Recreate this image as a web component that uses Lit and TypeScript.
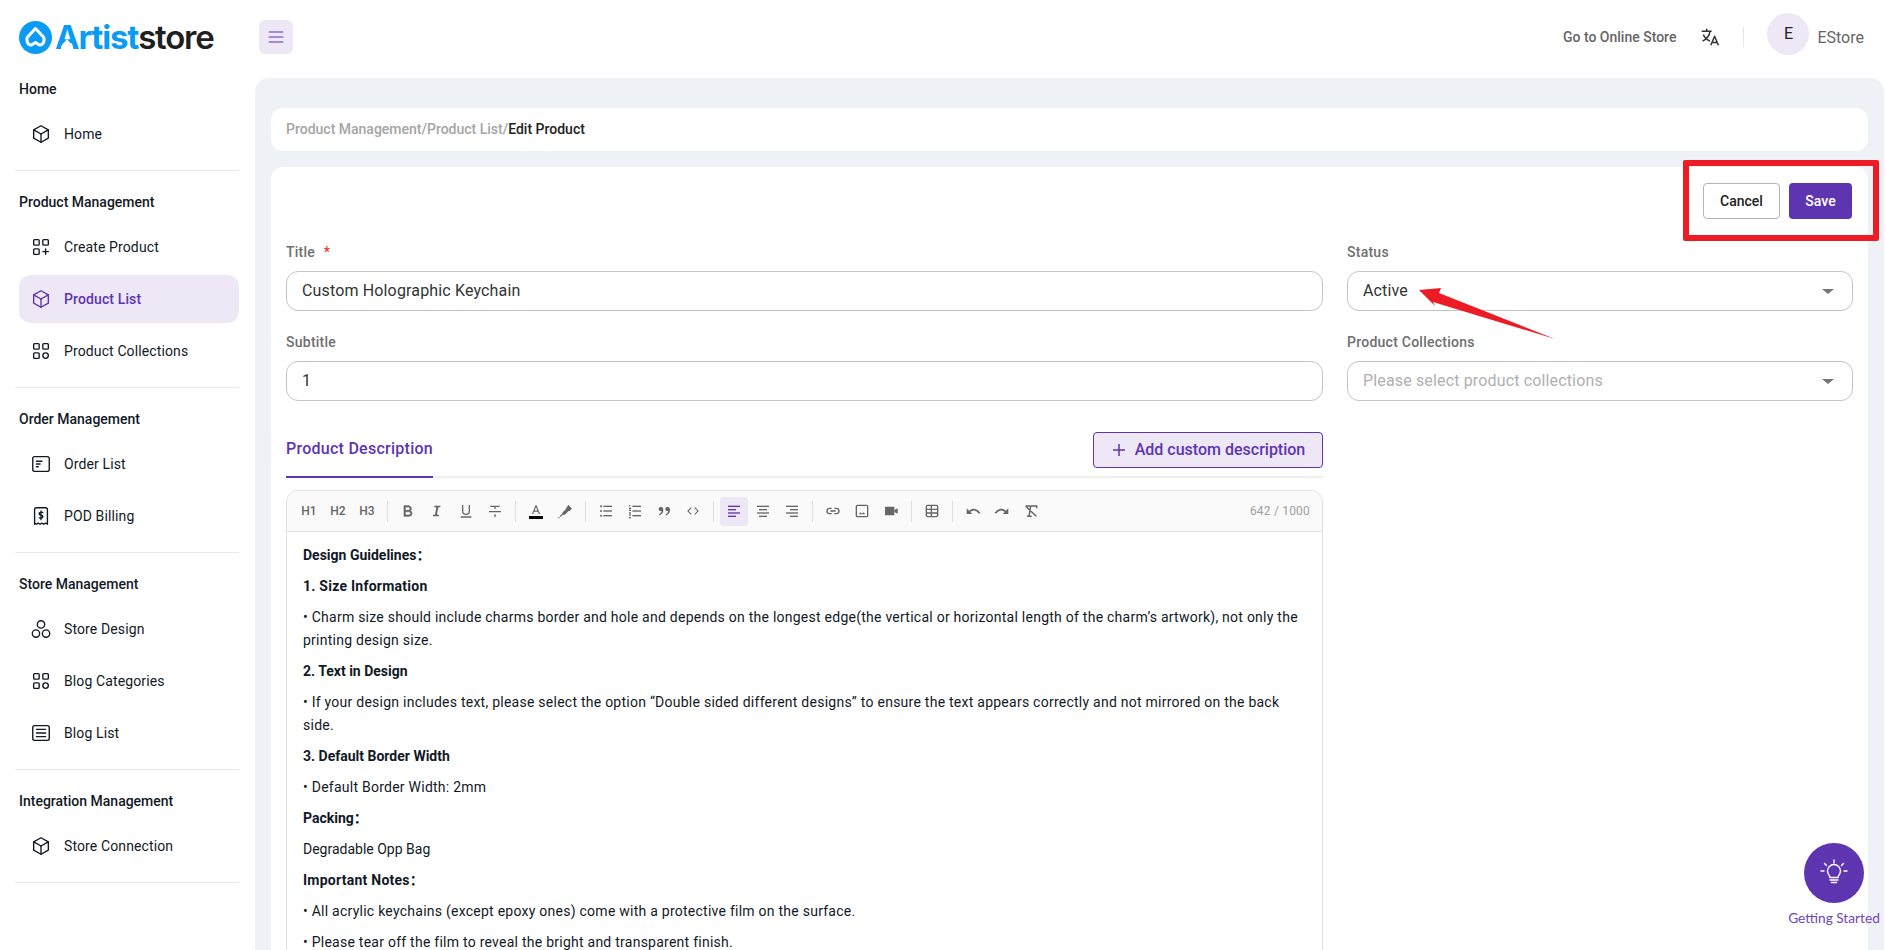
import { LitElement, html, css, svg } from "lit";
import { customElement } from "lit/decorators.js";

// tabler style nav icons, all on a 24 box
const navIcons: Record<string, unknown> = {
  box: svg`<path d="M12 3l8 4.5v9l-8 4.5l-8-4.5v-9z"/><path d="M12 12l8-4.5"/><path d="M12 12v9"/><path d="M12 12l-8-4.5"/>`,
  plus: svg`<rect x="4" y="4" width="6" height="6" rx="1"/><rect x="14" y="4" width="6" height="6" rx="1"/><rect x="4" y="14" width="6" height="6" rx="1"/><path d="M14 17h6M17 14v6"/>`,
  cat: svg`<rect x="4" y="4" width="6" height="6" rx="1"/><rect x="14" y="4" width="6" height="6" rx="1"/><rect x="4" y="14" width="6" height="6" rx="1"/><circle cx="17" cy="17" r="3"/>`,
  order: svg`<rect x="3" y="4" width="18" height="16" rx="2"/><path d="M7 9h6M7 12h4M7 15h2"/>`,
  bill: svg`<path d="M5 21V5a2 2 0 0 1 2-2h10a2 2 0 0 1 2 2v16l-2-1.2-2 1.2-2-1.2-2 1.2-2-1.2-2 1.2-2-1.2z"/><path d="M14 8h-2.5a1.5 1.5 0 0 0 0 3h1a1.5 1.5 0 0 1 0 3H10M12 6.5V16"/>`,
  circles: svg`<circle cx="12" cy="7" r="4"/><circle cx="6.5" cy="17" r="4"/><circle cx="17.5" cy="17" r="4"/>`,
  list: svg`<rect x="3" y="4" width="18" height="16" rx="2"/><path d="M7 8h10M7 12h10M7 16h10"/>`,
};

const navGroups = [
  { title: "Home", items: [{ label: "Home", icon: "box" }] },
  {
    title: "Product Management",
    items: [
      { label: "Create Product", icon: "plus" },
      { label: "Product List", icon: "box", active: true },
      { label: "Product Collections", icon: "cat" },
    ],
  },
  {
    title: "Order Management",
    items: [
      { label: "Order List", icon: "order" },
      { label: "POD Billing", icon: "bill" },
    ],
  },
  {
    title: "Store Management",
    items: [
      { label: "Store Design", icon: "circles" },
      { label: "Blog Categories", icon: "cat" },
      { label: "Blog List", icon: "list" },
    ],
  },
  { title: "Integration Management", items: [{ label: "Store Connection", icon: "box" }] },
];

const lines = (ys: number[][]) =>
  ys.map(([x, y, w]) => svg`<rect x=${x} y=${y} width=${w} height="2"/>`);

// toolbar, null marks a separator
const tools: (unknown | null)[] = [
  "H1",
  "H2",
  "H3",
  null,
  svg`<path d="M8 11h4.5a2.5 2.5 0 0 0 0-5H8v5zm10 4.5a4.5 4.5 0 0 1-4.5 4.5H6V4h6.5a4.5 4.5 0 0 1 3.26 7.61A4.5 4.5 0 0 1 18 15.5zM8 13v5h5.5a2.5 2.5 0 0 0 0-5H8z" stroke="currentColor" stroke-width="1"/>`,
  svg`<path d="M15 20H6v-2.500h2.900L11 6.500H8V4h9v2.500h-3L11.900 17.500H15V20z"/>`,
  svg`<path d="M8 3v9a4 4 0 0 0 8 0V3h2v9a6 6 0 0 1-12 0V3h2zM4 20h16v2H4v-2z"/>`,
  svg`<path d="M13 9h-2V6H5V4h14v2h-6v3zm0 8v4h-2v-4h2zM3 12h18v2H3v-2z"/>`,
  null,
  "color",
  svg`<path d="M16.500 2.500l5 5a1.500 1.500 0 0 1 0 2l-3 3-.800-.800-6 6-3-.500-.500-3 6-6-.800-.800 3-3a1.500 1.500 0 0 1 .100-1.900zM8.500 15.500l1.200 1.200-4.700 4.300-1.200-1.200 4.700-4.300z"/><circle cx="2.800" cy="22" r="1"/>`,
  null,
  svg`${lines([[8, 4, 13], [8, 11, 13], [8, 18, 13]])}<circle cx="4.500" cy="5" r="1.500"/><circle cx="4.500" cy="12" r="1.500"/><circle cx="4.500" cy="19" r="1.500"/>`,
  svg`${lines([[8, 4, 13], [8, 11, 13], [8, 18, 13]])}${lines([[3, 3, 2], [3, 7, 3], [3, 10, 3], [3, 14, 3], [3, 17, 3], [3, 21, 3]])}`,
  svg`<path d="M9.500 6.500c1 1.100 1.500 2.300 1.500 4.200 0 3.400-2.400 6.400-5.800 7.900l-.9-1.300c3.200-1.700 3.900-4 4-5.500-.3.200-.8.300-1.300.300C5.300 12.100 4 10.700 4 9s1.300-3.100 3-3.100c1 0 1.900.200 2.500.600zM19.500 6.500c1 1.100 1.500 2.300 1.500 4.200 0 3.400-2.400 6.400-5.800 7.900l-.9-1.300c3.200-1.700 3.900-4 4-5.500-.3.200-.8.300-1.300.300-1.700 0-3-1.400-3-3.100s1.300-3.100 3-3.100c1 0 1.900.200 2.500.600z"/>`,
  svg`<path d="M23 12l-7.070 7.070-1.410-1.410L20.170 12l-5.650-5.660 1.410-1.410L23 12zM3.830 12l5.650 5.660-1.410 1.410L1 12l7.070-7.070 1.410 1.410L3.830 12z" transform="translate(12 12) scale(.8) translate(-12 -12)"/>`,
  null,
  "alignLeft",
  svg`${lines([[3, 4, 18], [6, 9, 12], [3, 14, 18], [6, 19, 12]])}`,
  svg`${lines([[3, 4, 18], [9, 9, 12], [3, 14, 18], [9, 19, 12]])}`,
  null,
  svg`<path d="M10 8H7a4 4 0 0 0 0 8h3M14 8h3a4 4 0 0 1 0 8h-3M8 12h8" fill="none" stroke="currentColor" stroke-width="2"/>`,
  svg`<rect x="3.500" y="3.500" width="17" height="17" rx="1.500" fill="none" stroke="currentColor" stroke-width="2"/><path d="M7 17l3-3 2 2 2-2 3 3z"/>`,
  svg`<rect x="3" y="5.500" width="14" height="13" rx="1"/><path d="M17 10.500l5-2.500v8l-5-2.500z"/>`,
  null,
  svg`<rect x="3.500" y="3.500" width="17" height="17" rx="2" fill="none" stroke="currentColor" stroke-width="2"/><path d="M3.500 9.500h17M3.500 15h17M11 3.500v17" fill="none" stroke="currentColor" stroke-width="2"/>`,
  null,
  svg`<path d="M7 12.500c4-4 10-4 15 3" fill="none" stroke="currentColor" stroke-width="2.600"/><path d="M2.500 8v8.500H11z"/>`,
  svg`<path d="M17 12.500c-4-4-10-4-15 3" fill="none" stroke="currentColor" stroke-width="2.600"/><path d="M21.500 8v8.500H13z"/>`,
  svg`<path d="M4 4.500h16.500v3.500M11.500 4.500L9 20M4 5l16 15M6 20h7" fill="none" stroke="currentColor" stroke-width="2.200"/>`,
];

// paragraphs of the product description; wide ones carry extra tracking in the reference
const description: { text: string; bold?: boolean; wide?: boolean }[] = [
  { text: "Design Guidelines：", bold: true },
  { text: "1. Size Information", bold: true, wide: true },
  {
    text: "• Charm size should include charms border and hole and depends on the longest edge(the vertical or horizontal length of the charm’s artwork), not only the printing design size.",
    wide: true,
  },
  { text: "2. Text in Design", bold: true },
  {
    text: "• If your design includes text, please select the option “Double sided different designs” to ensure the text appears correctly and not mirrored on the back side.",
    wide: true,
  },
  { text: "3. Default Border Width", bold: true },
  { text: "• Default Border Width: 2mm", wide: true },
  { text: "Packing：", bold: true },
  { text: "Degradable Opp Bag" },
  { text: "Important Notes：", bold: true, wide: true },
  { text: "• All acrylic keychains (except epoxy ones) come with a protective film on the surface.", wide: true },
  { text: "• Please tear off the film to reveal the bright and transparent finish.", wide: true },
];

@customElement("app-root")
export class AppRoot extends LitElement {
  static styles = css`
    :host {
      display: block;
      position: relative;
      height: 950px;
      overflow: hidden;
      background: #fff;
      font-family: Roboto, "Noto Sans CJK SC", sans-serif;
      font-size: 14px;
      color: #121926;
    }
    .page {
      display: flex;
      height: 100%;
    }
    .sidebar {
      flex: 0 0 255px;
      box-sizing: border-box;
    }
    .logo {
      display: flex;
      align-items: center;
      height: 79px;
      padding: 0 0 5px 19px;
      box-sizing: border-box;
      gap: 3px;
    }
    .logo svg {
      width: 33px;
      height: 33px;
    }
    .logo-text {
      position: relative;
      font-family: Inter, sans-serif;
      font-weight: 600;
      font-size: 33px;
      letter-spacing: -1.2px;
      line-height: 36px;
      color: #1f1f1f;
    }
    .logo-text b {
      font-weight: 700;
      color: #0a9bf5;
    }
    .logo-text i {
      position: absolute;
      left: 6px;
      bottom: 4px;
      width: 12px;
      height: 12px;
      background: #fff;
      clip-path: polygon(50% 0, 100% 60%, 100% 100%, 50% 62%, 0 100%, 0 60%);
    }
    nav {
      padding: 0 16px 0 15px;
    }
    .group {
      padding: 21px 0 12px 4px;
      border-bottom: 1px solid #e8e8e8;
    }
    .group:first-child {
      padding-top: 0;
    }
    .group-title {
      height: 20px;
      line-height: 20px;
      font-weight: 500;
      margin-bottom: 11px;
    }
    .item {
      display: flex;
      align-items: center;
      gap: 12px;
      height: 48px;
      padding-left: 11px;
      margin-bottom: 4px;
      border-radius: 12px;
      color: #121926;
      letter-spacing: 0.12px;
    }
    .item:last-child {
      margin-bottom: 0;
    }
    .item svg {
      width: 22px;
      height: 22px;
      fill: none;
      stroke: currentColor;
      stroke-width: 1.5;
      stroke-linecap: round;
      stroke-linejoin: round;
    }
    .item.active {
      background: #ede7f6;
      color: #5e35b1;
      font-weight: 500;
    }
    .right {
      flex: 1;
      min-width: 0;
      display: flex;
      flex-direction: column;
    }
    header {
      flex: 0 0 78px;
      display: flex;
      align-items: center;
      padding: 0 22px 4px 4px;
      box-sizing: border-box;
    }
    .burger {
      width: 34px;
      height: 34px;
      border-radius: 6px;
      background: #ede7f6;
      display: flex;
      align-items: center;
      justify-content: center;
      color: #8e6cce;
    }
    .burger svg {
      width: 20px;
      height: 20px;
    }
    .spacer {
      flex: 1;
    }
    .store-link {
      color: #666;
      font-weight: 500;
    }
    .translate {
      width: 20px;
      height: 20px;
      margin-left: 24px;
      color: #333;
    }
    .vline {
      width: 1px;
      height: 20px;
      background: #e6e6e6;
      margin: 0 23px;
    }
    .avatar {
      width: 42px;
      height: 42px;
      box-sizing: border-box;
      padding-bottom: 2px;
      border-radius: 50%;
      background: #ede7f6;
      display: flex;
      align-items: center;
      justify-content: center;
      font-size: 16px;
      color: #222;
      margin: 0 8px 6px 0;
    }
    .user {
      font-size: 16px;
      color: #666;
    }
    .panel {
      flex: 1;
      min-height: 0;
      margin-right: 2px;
      padding: 30px 16px 0;
      background: #eef1f6;
      border-radius: 14px 14px 0 0;
    }
    .crumbs {
      display: flex;
      align-items: center;
      height: 43px;
      box-sizing: border-box;
      padding: 0 0 1px 15px;
      margin-bottom: 16px;
      background: #fff;
      border-radius: 12px;
      font-weight: 500;
      color: #a5a5a5;
    }
    .crumbs span {
      color: #222;
    }
    .card {
      background: #fff;
      border-radius: 12px 12px 0 0;
      padding: 16px 16px 0 15px;
      height: 900px;
    }
    .actions {
      display: flex;
      justify-content: flex-end;
      gap: 9px;
      margin-bottom: 23px;
    }
    .btn {
      height: 36px;
      box-sizing: border-box;
      display: flex;
      align-items: center;
      justify-content: center;
      border-radius: 4px;
      font-weight: 500;
    }
    .btn.cancel {
      width: 77px;
      border: 1px solid #b5b5b5;
      color: #222;
    }
    .btn.save {
      width: 63px;
      background: #5e35b1;
      color: #fff;
    }
    .columns {
      display: grid;
      grid-template-columns: 1037px 506px;
      column-gap: 24px;
    }
    .field {
      margin-bottom: 21px;
    }
    .label {
      height: 20px;
      line-height: 20px;
      margin-bottom: 9px;
      color: #6f6f6f;
      font-weight: 500;
      letter-spacing: 0.25px;
    }
    .label i {
      font-style: normal;
      color: #e53935;
      margin-left: 5px;
    }
    .input {
      display: flex;
      align-items: center;
      justify-content: space-between;
      height: 40px;
      box-sizing: border-box;
      padding: 0 15px 2px;
      border: 1px solid #c4c4c4;
      border-radius: 12px;
      font-size: 16px;
      letter-spacing: 0.15px;
      color: #333;
    }
    .input.ph {
      color: #b0b0b0;
    }
    .caret {
      width: 0;
      height: 0;
      border-left: 6px solid transparent;
      border-right: 6px solid transparent;
      border-top: 5px solid #757575;
      margin: 2px 3px 0 0;
    }
    .tabs {
      display: flex;
      justify-content: space-between;
      align-items: flex-end;
      margin-top: 31px;
      border-bottom: 2px solid #eee;
    }
    .tab {
      font-size: 16px;
      font-weight: 500;
      line-height: 24px;
      letter-spacing: 0.26px;
      padding-bottom: 15px;
      margin-bottom: -2px;
      color: #5e35b1;
      border-bottom: 2px solid #5e35b1;
    }
    .add {
      display: flex;
      align-items: center;
      justify-content: center;
      gap: 8px;
      width: 230px;
      height: 36px;
      box-sizing: border-box;
      padding-bottom: 1px;
      margin-bottom: 8px;
      background: #ede7f6;
      border: 1px solid #5e35b1;
      border-radius: 4px;
      color: #5e35b1;
      font-size: 16px;
      font-weight: 500;
    }
    .add svg {
      width: 16px;
      height: 16px;
    }
    .editor {
      margin-top: 12px;
      border: 1px solid #e0e0e0;
      border-radius: 12px;
      overflow: hidden;
    }
    .toolbar {
      display: flex;
      align-items: center;
      gap: 1px;
      height: 40px;
      padding: 0 12px 0 8px;
      background: #fafafa;
      border-bottom: 1px solid #e0e0e0;
      color: #666;
    }
    .tool {
      flex: 0 0 28px;
      height: 29px;
      display: flex;
      flex-direction: column;
      align-items: center;
      justify-content: center;
      border-radius: 4px;
      font-size: 12px;
      font-weight: 500;
    }
    .tool svg {
      width: 16px;
      height: 16px;
      fill: currentColor;
    }
    .tool.on {
      background: #ede7f6;
      color: #5e35b1;
    }
    .swatch {
      width: 14px;
      height: 3px;
      background: #000;
      margin-top: -1px;
    }
    .tool.color svg {
      width: 14px;
      height: 14px;
    }
    .sep {
      flex: 0 0 1px;
      height: 21px;
      margin: 0 5px;
      background: #e0e0e0;
    }
    .count {
      margin-left: auto;
      font-size: 12px;
      font-weight: 400;
      letter-spacing: 0.2px;
      color: #a0a0a0;
    }
    .body {
      padding: 12px 16px;
      line-height: 23px;
      color: #121926;
    }
    .body p {
      margin: 0 0 8px;
    }
    .body p.bold {
      font-weight: 700;
    }
    .body p.wide {
      letter-spacing: 0.25px;
    }
    .help {
      position: absolute;
      left: 1788px;
      top: 843px;
      width: 92px;
      display: flex;
      flex-direction: column;
      align-items: center;
      gap: 6px;
      font-family: Lato, sans-serif;
      font-size: 13.7px;
      color: #6f45bd;
      white-space: nowrap;
    }
    .help div {
      width: 60px;
      height: 60px;
      border-radius: 50%;
      background: #5e35b1;
      display: flex;
      align-items: center;
      justify-content: center;
    }
    .help svg {
      width: 30px;
      height: 30px;
      fill: none;
      stroke: #fff;
      stroke-width: 1.4;
      stroke-linecap: round;
    }
    .redbox {
      position: absolute;
      left: 1683px;
      top: 160px;
      width: 196px;
      height: 81px;
      box-sizing: border-box;
      border: 6px solid #ed1c24;
      border-radius: 2px;
    }
    .arrow {
      position: absolute;
      left: 1410px;
      top: 280px;
      width: 150px;
      height: 65px;
    }
  `;

  private renderTool(t: unknown) {
    if (t === null) return html`<span class="sep"></span>`;
    if (t === "H1" || t === "H2" || t === "H3") return html`<span class="tool">${t}</span>`;
    if (t === "color") {
      return html`<span class="tool color">
        <svg viewBox="0 0 24 24"><path d="M15.250 15H8.750l-1.600 4H5L11 4h2l6 15h-2.150l-1.600-4zm-.800-2L12 6.900 9.550 13h4.900z"/></svg>
        <span class="swatch"></span>
      </span>`;
    }
    if (t === "alignLeft") {
      return html`<span class="tool on"><svg viewBox="0 0 24 24">${lines([[3, 4, 18], [3, 9, 12], [3, 14, 18], [3, 19, 12]])}</svg></span>`;
    }
    return html`<span class="tool"><svg viewBox="0 0 24 24">${t}</svg></span>`;
  }

  render() {
    return html`
      <div class="page">
        <aside class="sidebar">
          <div class="logo">
            <svg viewBox="0 0 33 33">
              <circle cx="16.500" cy="16.500" r="16.500" fill="#0a9bf5"/>
              <path d="M16.500 7.500L24 15.500C26.500 18.500 24.500 24.500 20.500 24L16.500 21.500L12.500 24C8.500 24.500 6.500 18.500 9 15.500Z" fill="none" stroke="#fff" stroke-width="3" stroke-linejoin="round"/>
            </svg>
            <span class="logo-text"><b>Artist</b>store<i></i></span>
          </div>
          <nav>
            ${navGroups.map(
              (g) => html`
                <div class="group">
                  <div class="group-title">${g.title}</div>
                  ${g.items.map(
                    (it: { label: string; icon: string; active?: boolean }) => html`
                      <div class="item ${it.active ? "active" : ""}">
                        <svg viewBox="0 0 24 24">${navIcons[it.icon]}</svg>
                        <span>${it.label}</span>
                      </div>
                    `
                  )}
                </div>
              `
            )}
          </nav>
        </aside>
        <div class="right">
          <header>
            <div class="burger">
              <svg viewBox="0 0 24 24" fill="none" stroke="currentColor" stroke-width="2" stroke-linecap="round">
                <path d="M4 6h16M4 12h16M4 18h16"/>
              </svg>
            </div>
            <span class="spacer"></span>
            <span class="store-link">Go to Online Store</span>
            <svg class="translate" viewBox="0 0 24 24" fill="none" stroke="currentColor" stroke-width="1.800" stroke-linejoin="round">
              <path d="M2 5h12M8 2v3M4 9c1.500 4 4.500 6.500 8 8M12 5c-.5 5-4 9.500-9 12"/>
              <path d="M13 22l4.500-11 4.500 11M14.500 18.500h6"/>
            </svg>
            <span class="vline"></span>
            <span class="avatar">E</span>
            <span class="user">EStore</span>
          </header>
          <main class="panel">
            <div class="crumbs">Product Management/Product List/<span>Edit Product</span></div>
            <section class="card">
              <div class="actions">
                <div class="btn cancel">Cancel</div>
                <div class="btn save">Save</div>
              </div>
              <div class="columns">
                <div>
                  <div class="field">
                    <div class="label">Title <i>*</i></div>
                    <div class="input">Custom Holographic Keychain</div>
                  </div>
                  <div class="field">
                    <div class="label">Subtitle</div>
                    <div class="input">1</div>
                  </div>
                  <div class="tabs">
                    <div class="tab">Product Description</div>
                    <div class="add">
                      <svg viewBox="0 0 16 16" fill="none" stroke="currentColor" stroke-width="1.500"><path d="M8 2v12M2 8h12"/></svg>
                      Add custom description
                    </div>
                  </div>
                  <div class="editor">
                    <div class="toolbar">
                      ${tools.map((t) => this.renderTool(t))}
                      <span class="count">642 / 1000</span>
                    </div>
                    <div class="body">
                      ${description.map(
                        (p) => html`<p class="${p.bold ? "bold" : ""} ${p.wide ? "wide" : ""}">${p.text}</p>`
                      )}
                    </div>
                  </div>
                </div>
                <div>
                  <div class="field">
                    <div class="label">Status</div>
                    <div class="input">Active<span class="caret"></span></div>
                  </div>
                  <div class="field">
                    <div class="label">Product Collections</div>
                    <div class="input ph">Please select product collections<span class="caret"></span></div>
                  </div>
                </div>
              </div>
            </section>
          </main>
        </div>
      </div>
      <div class="help">
        <div>
          <svg viewBox="0 0 30 30">
            <path d="M11 19.500c0-2-2.500-3-2.500-6.500a6.500 6.500 0 0 1 13 0c0 3.500-2.500 4.500-2.500 6.500z"/>
            <path d="M11 22h8M12.500 24.500h5M15 2v3M5.500 5.500l2 2M24.500 5.500l-2 2M2 13h3M25 13h3"/>
          </svg>
        </div>
        Getting Started
      </div>
      <div class="redbox"></div>
      <svg class="arrow" viewBox="1410 280 150 65">
        <path d="M1419 290L1441 288L1439 293L1555 339L1433 302L1435 306z" fill="#ed1c24"/>
      </svg>
    `;
  }
}
